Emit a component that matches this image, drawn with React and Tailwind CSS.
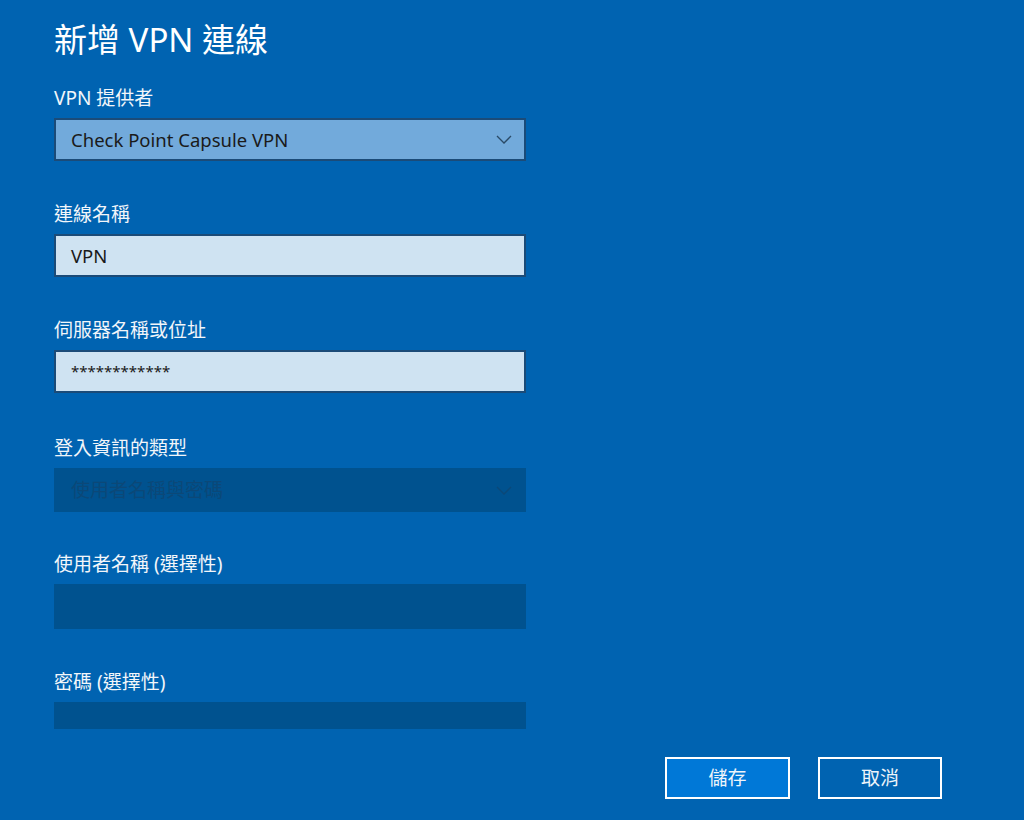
import React from "react";

const font = { fontFamily: '"Noto Sans", "Noto Sans CJK TC", sans-serif' };

function Chevron({ color }) {
  return (
    <svg width="16" height="9" viewBox="0 0 16 9" fill="none">
      <path d="M1 1 L8 8 L15 1" stroke={color} strokeWidth="1.3" />
    </svg>
  );
}

function Label({ children }) {
  return (
    <div className="h-[24px] leading-[24px] text-[19px] text-[#f2f6fa] whitespace-nowrap">
      {children}
    </div>
  );
}

export default function App() {
  return (
    <div
      className="w-[1024px] h-[820px] bg-[#0063b1] overflow-hidden flex flex-col"
      style={font}
    >
      <div className="pl-[54px] w-[526px] flex flex-col">
        <div className="pt-[20px] h-[60px] leading-[40px] text-[33px] text-white whitespace-nowrap">
          新增 VPN 連線
        </div>

        <div className="mt-[26px] flex flex-col gap-[8px]">
          <Label>VPN 提供者</Label>
          <div className="h-[43px] border-2 border-[#1b4b78] bg-[#72aadb] flex items-center justify-between pl-[15px] pr-[12px]">
            <span className="text-[18.5px] text-[#1a1a1a]">Check Point Capsule VPN</span>
            <Chevron color="#2a4a66" />
          </div>
        </div>

        <div className="mt-[41px] flex flex-col gap-[8px]">
          <Label>連線名稱</Label>
          <div className="h-[43px] border-2 border-[#1b4b78] bg-[#cfe3f2] flex items-center pl-[15px]">
            <span className="text-[18.5px] text-[#1a1a1a]">VPN</span>
          </div>
        </div>

        <div className="mt-[41px] flex flex-col gap-[8px]">
          <Label>伺服器名稱或位址</Label>
          <div className="h-[43px] border-2 border-[#1b4b78] bg-[#cfe3f2] flex items-center pl-[15px]">
            <span className="text-[15px] text-[#1a1a1a]">************</span>
          </div>
        </div>

        <div className="mt-[43px] flex flex-col gap-[8px]">
          <Label>登入資訊的類型</Label>
          <div className="h-[44px] bg-[#00528f] flex items-center justify-between pl-[17px] pr-[14px]">
            <span className="text-[19px] text-[#0b4878]">使用者名稱與密碼</span>
            <Chevron color="#0b4878" />
          </div>
        </div>

        <div className="mt-[40px] flex flex-col gap-[8px]">
          <Label>使用者名稱 (選擇性)</Label>
          <div className="h-[45px] bg-[#00528f]" />
        </div>

        <div className="mt-[41px] flex flex-col gap-[8px]">
          <Label>密碼 (選擇性)</Label>
          <div className="h-[27px] bg-[#00528f]" />
        </div>
      </div>

      <div className="mt-[28px] flex justify-end gap-[28px] pr-[82px]">
        <button className="w-[125px] h-[42px] border-2 border-white bg-[#0078d7] text-[19px] text-[#eef4fa]">
          儲存
        </button>
        <button className="w-[124px] h-[42px] border-2 border-white bg-[#0063b1] text-[19px] text-[#eef4fa]">
          取消
        </button>
      </div>
    </div>
  );
}
